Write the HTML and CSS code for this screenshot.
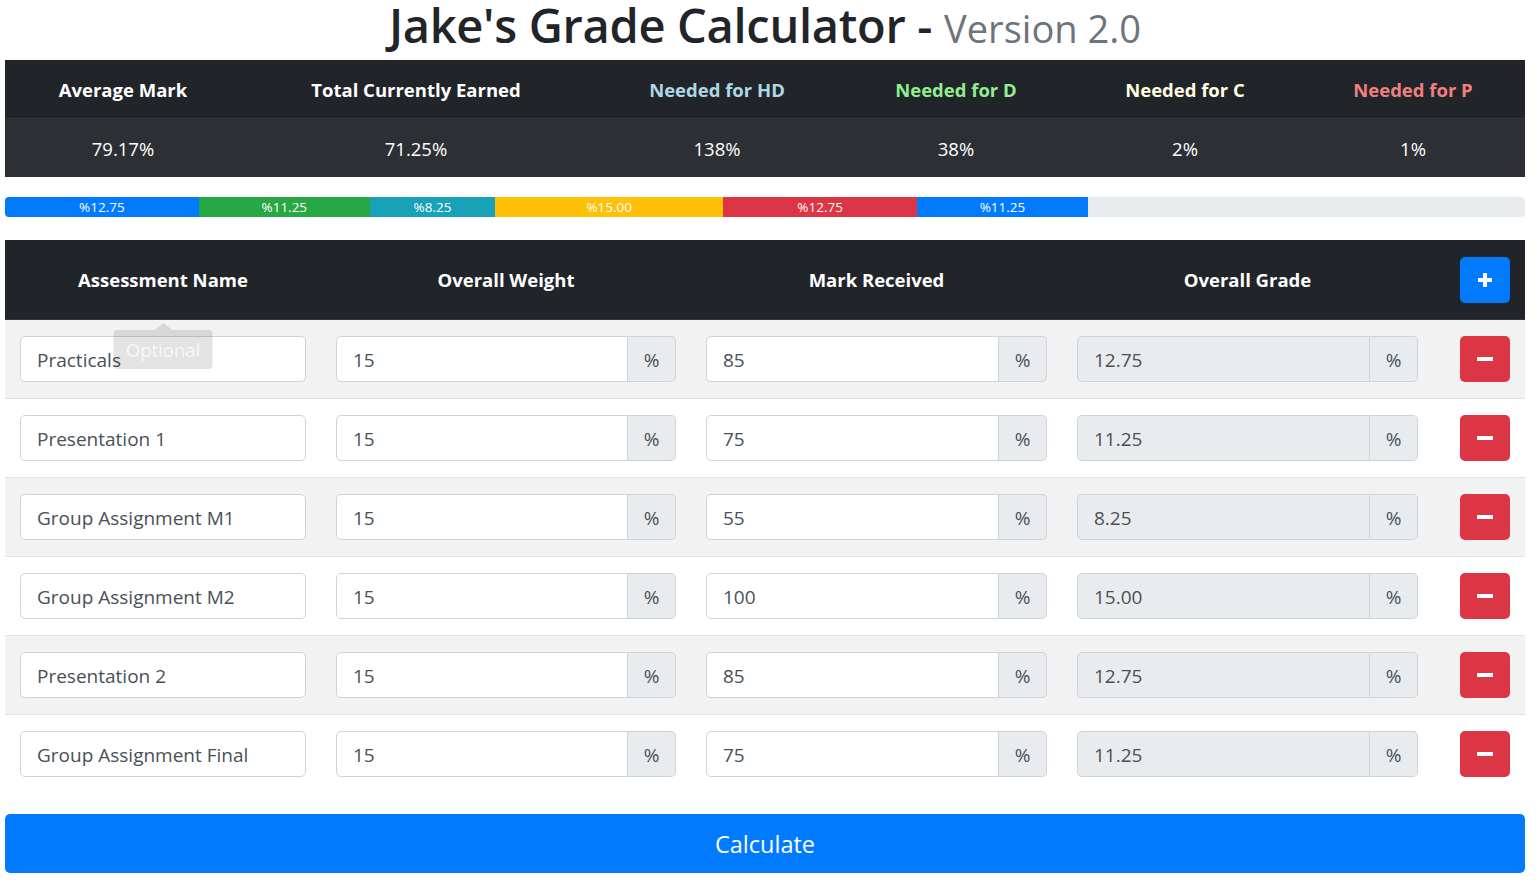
FILE: index.html
```html
<!DOCTYPE html>
<html lang="en">
<head>
<meta charset="utf-8">
<title>Jake's Grade Calculator</title>
<link rel="stylesheet" href="styles.css">
</head>
<body>
<div class="page">
  <h1 class="title">Jake's Grade Calculator - <small class="muted">Version 2.0</small></h1>

  <div class="stats">
    <div class="stats-row stats-head">
      <div>Average Mark</div>
      <div>Total Currently Earned</div>
      <div class="hd">Needed for HD</div>
      <div class="d">Needed for D</div>
      <div class="c">Needed for C</div>
      <div class="p">Needed for P</div>
    </div>
    <div class="stats-row stats-body">
      <div>79.17%</div>
      <div>71.25%</div>
      <div>138%</div>
      <div>38%</div>
      <div>2%</div>
      <div>1%</div>
    </div>
  </div>

  <div class="progress">
    <div class="seg bg-blue" style="width:12.75%">%12.75</div>
    <div class="seg bg-green" style="width:11.25%">%11.25</div>
    <div class="seg bg-teal" style="width:8.25%">%8.25</div>
    <div class="seg bg-yellow" style="width:15%">%15.00</div>
    <div class="seg bg-red" style="width:12.75%">%12.75</div>
    <div class="seg bg-blue" style="width:11.25%">%11.25</div>
  </div>

  <div class="grades">
    <div class="grades-head">
      <div class="hcell">Assessment Name</div>
      <div class="hcell">Overall Weight</div>
      <div class="hcell">Mark Received</div>
      <div class="hcell">Overall Grade</div>
      <div class="hcell end">
        <button class="btn btn-add" type="button" aria-label="Add">
          <svg width="16" height="16" viewBox="0 0 16 16"><rect x="6" y="1" width="4" height="14" fill="#fff"/><rect x="1" y="6" width="14" height="4" fill="#fff"/></svg>
        </button>
      </div>
    </div>

    <div class="grow striped">
      <div class="cell tip-host">
        <input class="form-control" type="text" value="Practicals">
        <div class="tooltip"><span class="tooltip-arrow"></span>Optional</div>
      </div>
      <div class="cell"><div class="input-group"><input class="form-control" type="text" value="15"><span class="addon">%</span></div></div>
      <div class="cell"><div class="input-group"><input class="form-control" type="text" value="85"><span class="addon">%</span></div></div>
      <div class="cell"><div class="input-group"><input class="form-control ro" type="text" value="12.75" readonly><span class="addon">%</span></div></div>
      <div class="cell end"><button class="btn btn-remove" type="button" aria-label="Remove"><svg width="16" height="4" viewBox="0 0 16 4"><rect x="0" y="0" width="16" height="4" fill="#fff"/></svg></button></div>
    </div>

    <div class="grow">
      <div class="cell"><input class="form-control" type="text" value="Presentation 1"></div>
      <div class="cell"><div class="input-group"><input class="form-control" type="text" value="15"><span class="addon">%</span></div></div>
      <div class="cell"><div class="input-group"><input class="form-control" type="text" value="75"><span class="addon">%</span></div></div>
      <div class="cell"><div class="input-group"><input class="form-control ro" type="text" value="11.25" readonly><span class="addon">%</span></div></div>
      <div class="cell end"><button class="btn btn-remove" type="button" aria-label="Remove"><svg width="16" height="4" viewBox="0 0 16 4"><rect x="0" y="0" width="16" height="4" fill="#fff"/></svg></button></div>
    </div>

    <div class="grow striped">
      <div class="cell"><input class="form-control" type="text" value="Group Assignment M1"></div>
      <div class="cell"><div class="input-group"><input class="form-control" type="text" value="15"><span class="addon">%</span></div></div>
      <div class="cell"><div class="input-group"><input class="form-control" type="text" value="55"><span class="addon">%</span></div></div>
      <div class="cell"><div class="input-group"><input class="form-control ro" type="text" value="8.25" readonly><span class="addon">%</span></div></div>
      <div class="cell end"><button class="btn btn-remove" type="button" aria-label="Remove"><svg width="16" height="4" viewBox="0 0 16 4"><rect x="0" y="0" width="16" height="4" fill="#fff"/></svg></button></div>
    </div>

    <div class="grow">
      <div class="cell"><input class="form-control" type="text" value="Group Assignment M2"></div>
      <div class="cell"><div class="input-group"><input class="form-control" type="text" value="15"><span class="addon">%</span></div></div>
      <div class="cell"><div class="input-group"><input class="form-control" type="text" value="100"><span class="addon">%</span></div></div>
      <div class="cell"><div class="input-group"><input class="form-control ro" type="text" value="15.00" readonly><span class="addon">%</span></div></div>
      <div class="cell end"><button class="btn btn-remove" type="button" aria-label="Remove"><svg width="16" height="4" viewBox="0 0 16 4"><rect x="0" y="0" width="16" height="4" fill="#fff"/></svg></button></div>
    </div>

    <div class="grow striped">
      <div class="cell"><input class="form-control" type="text" value="Presentation 2"></div>
      <div class="cell"><div class="input-group"><input class="form-control" type="text" value="15"><span class="addon">%</span></div></div>
      <div class="cell"><div class="input-group"><input class="form-control" type="text" value="85"><span class="addon">%</span></div></div>
      <div class="cell"><div class="input-group"><input class="form-control ro" type="text" value="12.75" readonly><span class="addon">%</span></div></div>
      <div class="cell end"><button class="btn btn-remove" type="button" aria-label="Remove"><svg width="16" height="4" viewBox="0 0 16 4"><rect x="0" y="0" width="16" height="4" fill="#fff"/></svg></button></div>
    </div>

    <div class="grow">
      <div class="cell"><input class="form-control" type="text" value="Group Assignment Final"></div>
      <div class="cell"><div class="input-group"><input class="form-control" type="text" value="15"><span class="addon">%</span></div></div>
      <div class="cell"><div class="input-group"><input class="form-control" type="text" value="75"><span class="addon">%</span></div></div>
      <div class="cell"><div class="input-group"><input class="form-control ro" type="text" value="11.25" readonly><span class="addon">%</span></div></div>
      <div class="cell end"><button class="btn btn-remove" type="button" aria-label="Remove"><svg width="16" height="4" viewBox="0 0 16 4"><rect x="0" y="0" width="16" height="4" fill="#fff"/></svg></button></div>
    </div>
  </div>

  <button class="calc" type="button">Calculate</button>
</div>
</body>
</html>
```
FILE: styles.css
```css
* { box-sizing: border-box; }

body {
  margin: 0;
  background: #fff;
  color: #212529;
  font-family: "Open Sans", "Noto Sans", "DejaVu Sans", sans-serif;
}

.page {
  width: 1520px;
  margin-left: 5px;
}

.title {
  margin: 0;
  height: 60px;
  line-height: 50px;
  text-align: center;
  font-size: 47px;
  font-weight: 600;
  letter-spacing: -0.3px;
  white-space: nowrap;
}

.title .muted {
  font-size: 81%;
  font-weight: 400;
  letter-spacing: 0;
  color: #6c757d;
}

/* stats table */
.stats-row {
  display: grid;
  grid-template-columns: 236px 350px 252px 226px 232px 224px;
  align-items: center;
  text-align: center;
  color: #fff;
  font-size: 18.5px;
}

.stats-head {
  height: 59px;
  background: #212529;
  border-bottom: 1px solid #32383e;
  font-weight: 700;
}

.stats-body {
  height: 58px;
  background: #2c3034;
}

.hd { color: #add8e6; }
.d { color: #90ee90; }
.c { color: #ffffe0; }
.p { color: #f08080; }

/* progress bar */
.progress {
  display: flex;
  margin-top: 20px;
  height: 20px;
  background: #e9ecef;
  border-radius: 4px;
  overflow: hidden;
  color: #fff;
  font-size: 13.5px;
}

.seg {
  display: flex;
  align-items: center;
  justify-content: center;
  white-space: nowrap;
}

.bg-blue { background: #007bff; }
.bg-green { background: #28a745; }
.bg-teal { background: #17a2b8; }
.bg-yellow { background: #ffc107; }
.bg-red { background: #dc3545; }

/* grades table */
.grades {
  margin-top: 23px;
}

.grades-head,
.grow {
  display: grid;
  grid-template-columns: 316px 370px 371px 371px 92px;
}

.grades-head {
  height: 79px;
  background: #212529;
  color: #fff;
  font-size: 18.5px;
  font-weight: 700;
}

.hcell {
  display: flex;
  align-items: center;
  justify-content: center;
  padding: 0 15px;
}

.hcell.end,
.cell.end {
  justify-content: flex-end;
}

.grow {
  border-top: 1px solid #dee2e6;
}

.grow.striped {
  background: #f2f2f2;
}

.grades-head + .grow {
  border-top-color: #32383e;
}

.cell {
  display: flex;
  padding: 16px 15px;
}

.tip-host {
  position: relative;
}

.input-group {
  display: flex;
  width: 100%;
  height: 46px;
}

.form-control {
  flex: 1;
  min-width: 0;
  width: 100%;
  height: 46px;
  padding: 1px 16px 0;
  border: 1px solid #ced4da;
  border-radius: 5px;
  background: #fff;
  color: #495057;
  font-family: "Open Sans", "Noto Sans", "DejaVu Sans", sans-serif;
  font-size: 19px;
  outline: none;
}

.input-group .form-control {
  border-top-right-radius: 0;
  border-bottom-right-radius: 0;
}

.form-control.ro {
  background: #e9ecef;
}

.addon {
  flex: 0 0 48px;
  display: flex;
  align-items: center;
  justify-content: center;
  padding-top: 1px;
  border: 1px solid #ced4da;
  border-left: 0;
  border-radius: 0 5px 5px 0;
  background: #e9ecef;
  color: #495057;
  font-size: 19px;
}

.btn {
  display: flex;
  align-items: center;
  justify-content: center;
  width: 50px;
  height: 46px;
  padding: 0;
  border: 0;
  border-radius: 5px;
}

.btn-add { background: #007bff; }
.btn-remove { background: #dc3545; }

/* tooltip */
.tooltip {
  position: absolute;
  top: 10px;
  left: 50%;
  transform: translateX(-50%);
  width: 99px;
  height: 39px;
  display: flex;
  align-items: center;
  justify-content: center;
  border-radius: 4px;
  background: rgba(0, 0, 0, 0.11);
  color: rgba(255, 255, 255, 0.75);
  font-size: 18.5px;
}

.tooltip-arrow {
  position: absolute;
  top: -7px;
  left: 50%;
  margin-left: -9px;
  width: 0;
  height: 0;
  border-left: 9px solid transparent;
  border-right: 9px solid transparent;
  border-bottom: 7px solid rgba(0, 0, 0, 0.11);
}

/* calculate */
.calc {
  display: block;
  width: 100%;
  height: 59px;
  margin-top: 21px;
  border: 0;
  border-radius: 5px;
  background: #007bff;
  color: #fff;
  font-family: "Open Sans", "Noto Sans", "DejaVu Sans", sans-serif;
  font-size: 23.5px;
}
```
